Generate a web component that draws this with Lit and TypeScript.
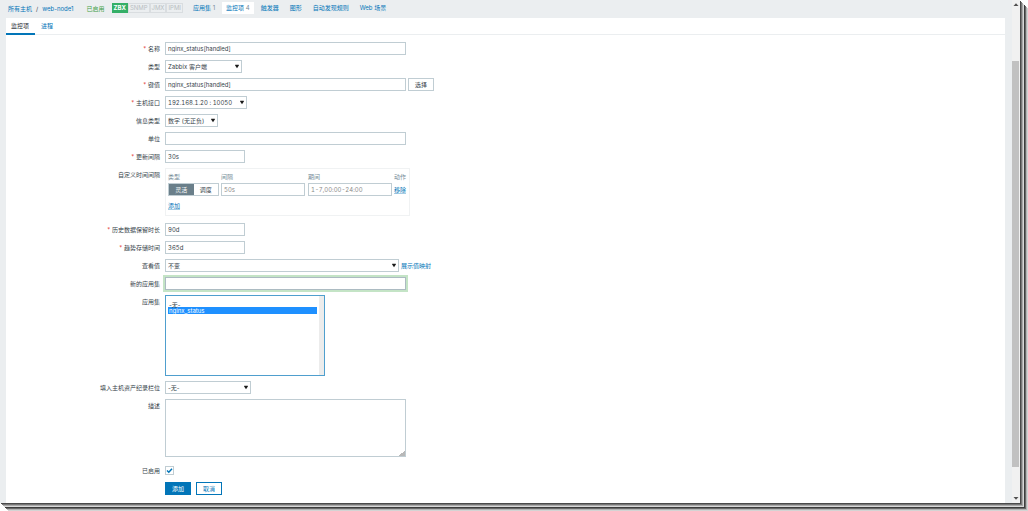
import { LitElement, html, css } from "lit";
import { customElement, property } from "lit/decorators.js";

@customElement("select-caret")
class SelectCaret extends LitElement {
  static styles = css`
    :host { display: block; pointer-events: none; }
    svg { display: block; width: 4px; height: 5px; }
  `;
  render() {
    return html`<svg viewBox="0 0 4 5" aria-hidden="true"><path d="M.2 .7h3.600v.9L2 4.300 .2 1.600z" fill="#1a1a1a" /></svg>`;
  }
}

@customElement("page-scrollbar")
class PageScrollbar extends LitElement {
  static styles = css`
    :host { display: flex; flex-direction: column; width: 8px; background: #f1f1f1; }
    .arrow { display: block; width: 8px; height: 10px; }
    .track { flex: 1; display: flex; flex-direction: column; padding: 51px 1px 26px 0; }
    .thumb { flex: 1; background: #c1c1c1; }
  `;
  render() {
    return html`
      <svg class="arrow" viewBox="0 0 8 10"><path d="M1.500 6 4 3.300 6.500 6z" fill="#505050" /></svg>
      <div class="track"><div class="thumb"></div></div>
      <svg class="arrow" viewBox="0 0 8 10"><path d="M1.500 4 4 6.700 6.500 4z" fill="#505050" /></svg>
    `;
  }
}

@customElement("app-root")
class AppRoot extends LitElement {
  @property({ type: Boolean }) enabled = true;

  static styles = css`
    :host {
      display: block;
      background: #fff;
      color: #36434a;
      font-family: Inter, "Liberation Sans", "Noto Sans CJK SC", sans-serif;
      font-size: 6px;
      line-height: 9px;
    }
    *, *::before { box-sizing: border-box; }
    input, select, textarea, button {
      font: inherit;
      color: inherit;
      margin: 0;
      border-radius: 0;
    }
    a { color: #0275b8; text-decoration: none; }

    .shell { min-height: 100vh; display: flex; padding: 0 8px 8px 0; }
    .window {
      flex: 1;
      display: flex;
      background: #ebeef0;
      box-shadow: 1px 1px #4a4a4a, 2px 2px #777, 3px 3px #a8a8a8, 4px 4px #d8d8d8,
        5px 5px #3c3c3c, 6px 6px #6a6a6a, 7px 7px #b4b4b4, 8px 8px #d4d4d4;
    }
    .page { flex: 1; display: flex; flex-direction: column; padding: 0 7px 0 6px; }

    .nav { display: flex; align-items: center; height: 18px; padding: 0 0 2px 2px; }
    .crumbs { display: flex; gap: 4px; margin-right: 13px; }
    .on { color: #429e47; margin-right: 7px; }
    .badges { display: flex; margin-right: 6px; }
    .badge { height: 10px; padding: 0 1px; border: 1px solid #d9dde0; color: #b8bec2; line-height: 8px; }
    .badge.active { background: #34af67; border-color: #34af67; color: #fff; font-weight: 700; }
    .tabs { display: flex; gap: 3px; }
    .tabs a { height: 12px; padding: 0 4px; line-height: 12px; }
    .tabs a.current { background: #fff; }
    .tabs span { color: #768d99; }

    .card { flex: 1; background: #fff; }
    .subtabs { display: flex; gap: 1px; height: 17px; border-bottom: 1px solid #ebeef0; }
    .subtabs a { height: 17px; padding: 0 6px 0 5px; line-height: 16px; }
    .subtabs a.current { color: #1f2c33; border-bottom: 2px solid #0275b8; }

    form { display: grid; gap: 5px; padding: 7px 0 8px; }
    .row { display: grid; grid-template-columns: 154px 1fr; column-gap: 5px; }
    .name { text-align: right; line-height: 13px; }
    .required::before { content: "* "; color: #e33734; }
    .field { display: flex; align-items: center; gap: 2px; }
    .text, .pick select, .area {
      border: 1px solid #c0cdd3;
      background: #fff;
      outline: none;
    }
    .text, .pick select { height: 13px; padding: 0 2px; line-height: 11px; }
    .text, .w-host select { font-variant-numeric: tabular-nums; }
    .text { width: 80px; }
    .wide { width: 241px; }
    .fresh { border-color: #acbbc2; box-shadow: 0 0 0 2px #c4e4c6; }
    .pick { display: grid; align-items: center; }
    .pick select, .pick select-caret { grid-area: 1 / 1; }
    .pick select { appearance: none; width: 100%; }
    .pick select-caret { justify-self: end; margin-right: 3px; }
    .w-type { width: 77px; }
    .w-host { width: 82px; }
    .w-info { width: 53px; }
    .w-value { width: 234px; }
    .w-inv { width: 86px; }

    button { height: 13px; padding: 0 6px; border: 1px solid #c0cdd3; background: #fff; line-height: 11px; }
    .actions { display: flex; gap: 5px; }
    .actions button { border-color: #0275b8; color: #0275b8; }
    .actions .primary { background: #0275b8; color: #fff; }

    .intervals { width: 245px; border: 1px solid #f0f2f3; padding: 3px 2px 2px; margin-bottom: 2px; }
    table { width: 100%; border-collapse: collapse; table-layout: fixed; }
    th { padding: 0 0 2px; text-align: left; font-weight: 400; color: #768d99; line-height: 9px; }
    td { padding: 0; vertical-align: middle; }
    .c-type { width: 53px; }
    .c-gap { width: 87px; }
    .c-period { width: 86px; }
    td .text { display: block; width: 84px; }
    .text::placeholder { color: #8a8a8a; opacity: 1; }
    .dotted { border-bottom: 1px solid #a6cde4; }
    .seg { display: flex; width: 51px; height: 13px; border: 1px solid #c0cdd3; }
    .seg input { appearance: none; position: absolute; width: 0; height: 0; }
    .seg label { flex: 1; text-align: center; line-height: 11px; }
    .seg input:checked + label { background: #6a7f8a; color: #fff; }
    .more td { padding: 5px 0 3px; }

    .list {
      width: 160px;
      height: 81px;
      padding: 4px 7px 0 2px;
      border: 1px solid #4f9fce;
      outline: none;
      overflow: hidden;
      background: linear-gradient(#ececec, #ececec) right / 5px 100% no-repeat #fff;
    }
    .list option { min-height: 7px; height: 7px; padding: 0 1px; line-height: 7px; }
    .list option:checked { background: linear-gradient(#1e90ff, #1e90ff); color: #fff; }
    .area { display: block; width: 241px; height: 58px; margin-bottom: 2px; resize: vertical; }
    .area::-webkit-resizer { background: linear-gradient(135deg, transparent 80%, #b8b8b8 80%); }
    .tick { display: grid; align-items: center; justify-items: center; }
    .tick input { grid-area: 1 / 1; appearance: none; width: 9px; height: 9px; border: 1px solid #c0cdd3; background: #fff; }
    .tick svg { grid-area: 1 / 1; width: 7px; height: 7px; pointer-events: none; }
  `;

  private pick(id: string, width: string, value: string) {
    return html`<div class="pick ${width}">
      <select id=${id}><option>${value}</option></select><select-caret></select-caret>
    </div>`;
  }

  private row(id: string, label: string, required: boolean, field: unknown) {
    return html`<div class="row">
      <label class="name ${required ? "required" : ""}" for=${id}>${label}</label>
      <div class="field">${field}</div>
    </div>`;
  }

  render() {
    return html`
      <div class="shell"><div class="window">
        <div class="page">
          <nav class="nav">
            <div class="crumbs"><a href="#">所有主机</a><span>/</span><a href="#">web-node1</a></div>
            <span class="on">已启用</span>
            <div class="badges">
              <span class="badge active">ZBX</span><span class="badge">SNMP</span><span class="badge">JMX</span><span class="badge">IPMI</span>
            </div>
            <div class="tabs">
              <a href="#">应用集 <span>1</span></a>
              <a href="#" class="current">监控项 <span>4</span></a>
              <a href="#">触发器</a>
              <a href="#">图形</a>
              <a href="#">自动发现规则</a>
              <a href="#">Web 场景</a>
            </div>
          </nav>
          <main class="card">
            <div class="subtabs"><a href="#" class="current">监控项</a><a href="#">进程</a></div>
            <form @submit=${(e: Event) => e.preventDefault()}>
              ${this.row("name", "名称", true, html`<input id="name" class="text wide" value="nginx_status[handled]" />`)}
              ${this.row("type", "类型", false, this.pick("type", "w-type", "Zabbix 客户端"))}
              ${this.row("key", "键值", true, html`<input id="key" class="text wide" value="nginx_status[handled]" /><button type="button">选择</button>`)}
              ${this.row("host", "主机接口", true, this.pick("host", "w-host", "192.168.1.20 : 10050"))}
              ${this.row("info", "信息类型", false, this.pick("info", "w-info", "数字 (无正负)"))}
              ${this.row("unit", "单位", false, html`<input id="unit" class="text wide" />`)}
              ${this.row("delay", "更新间隔", true, html`<input id="delay" class="text" value="30s" />`)}
              ${this.row("gap", "自定义时间间隔", false, html`
                <div class="intervals">
                  <table>
                    <colgroup><col class="c-type" /><col class="c-gap" /><col class="c-period" /><col /></colgroup>
                    <thead><tr><th>类型</th><th>间隔</th><th>期间</th><th>动作</th></tr></thead>
                    <tbody>
                      <tr>
                        <td><div class="seg">
                          <input type="radio" name="mode" id="flex" checked /><label for="flex">灵活</label>
                          <input type="radio" name="mode" id="sched" /><label for="sched">调度</label>
                        </div></td>
                        <td><input id="gap" class="text" placeholder="50s" /></td>
                        <td><input class="text" aria-label="期间" placeholder="1-7,00:00-24:00" /></td>
                        <td><a href="#" class="dotted">移除</a></td>
                      </tr>
                      <tr class="more"><td colspan="4"><a href="#" class="dotted">添加</a></td></tr>
                    </tbody>
                  </table>
                </div>`)}
              ${this.row("history", "历史数据保留时长", true, html`<input id="history" class="text" value="90d" />`)}
              ${this.row("trends", "趋势存储时间", true, html`<input id="trends" class="text" value="365d" />`)}
              ${this.row("value", "查看值", false, html`${this.pick("value", "w-value", "不变")}<a href="#">展示值映射</a>`)}
              ${this.row("newapp", "新的应用集", false, html`<input id="newapp" class="text wide fresh" />`)}
              ${this.row("apps", "应用集", false, html`<select id="apps" class="list" multiple size="10"><option>-无-</option><option selected>nginx_status</option></select>`)}
              ${this.row("inv", "填入主机资产纪录栏位", false, this.pick("inv", "w-inv", "-无-"))}
              ${this.row("desc", "描述", false, html`<textarea id="desc" class="area"></textarea>`)}
              ${this.row("enabled", "已启用", false, html`<span class="tick">
                <input id="enabled" type="checkbox" .checked=${this.enabled} @change=${(e: Event) => (this.enabled = (e.target as HTMLInputElement).checked)} />
                ${this.enabled ? html`<svg viewBox="0 0 7 7"><path d="M1 3.500 2.800 5.200 6 1.800" fill="none" stroke="#0275b8" stroke-width="1.500" /></svg>` : ""}
              </span>`)}
              <div class="row"><span></span><div class="actions">
                <button class="primary">添加</button><button type="button">取消</button>
              </div></div>
            </form>
          </main>
        </div>
        <page-scrollbar></page-scrollbar>
      </div></div>
    `;
  }
}
